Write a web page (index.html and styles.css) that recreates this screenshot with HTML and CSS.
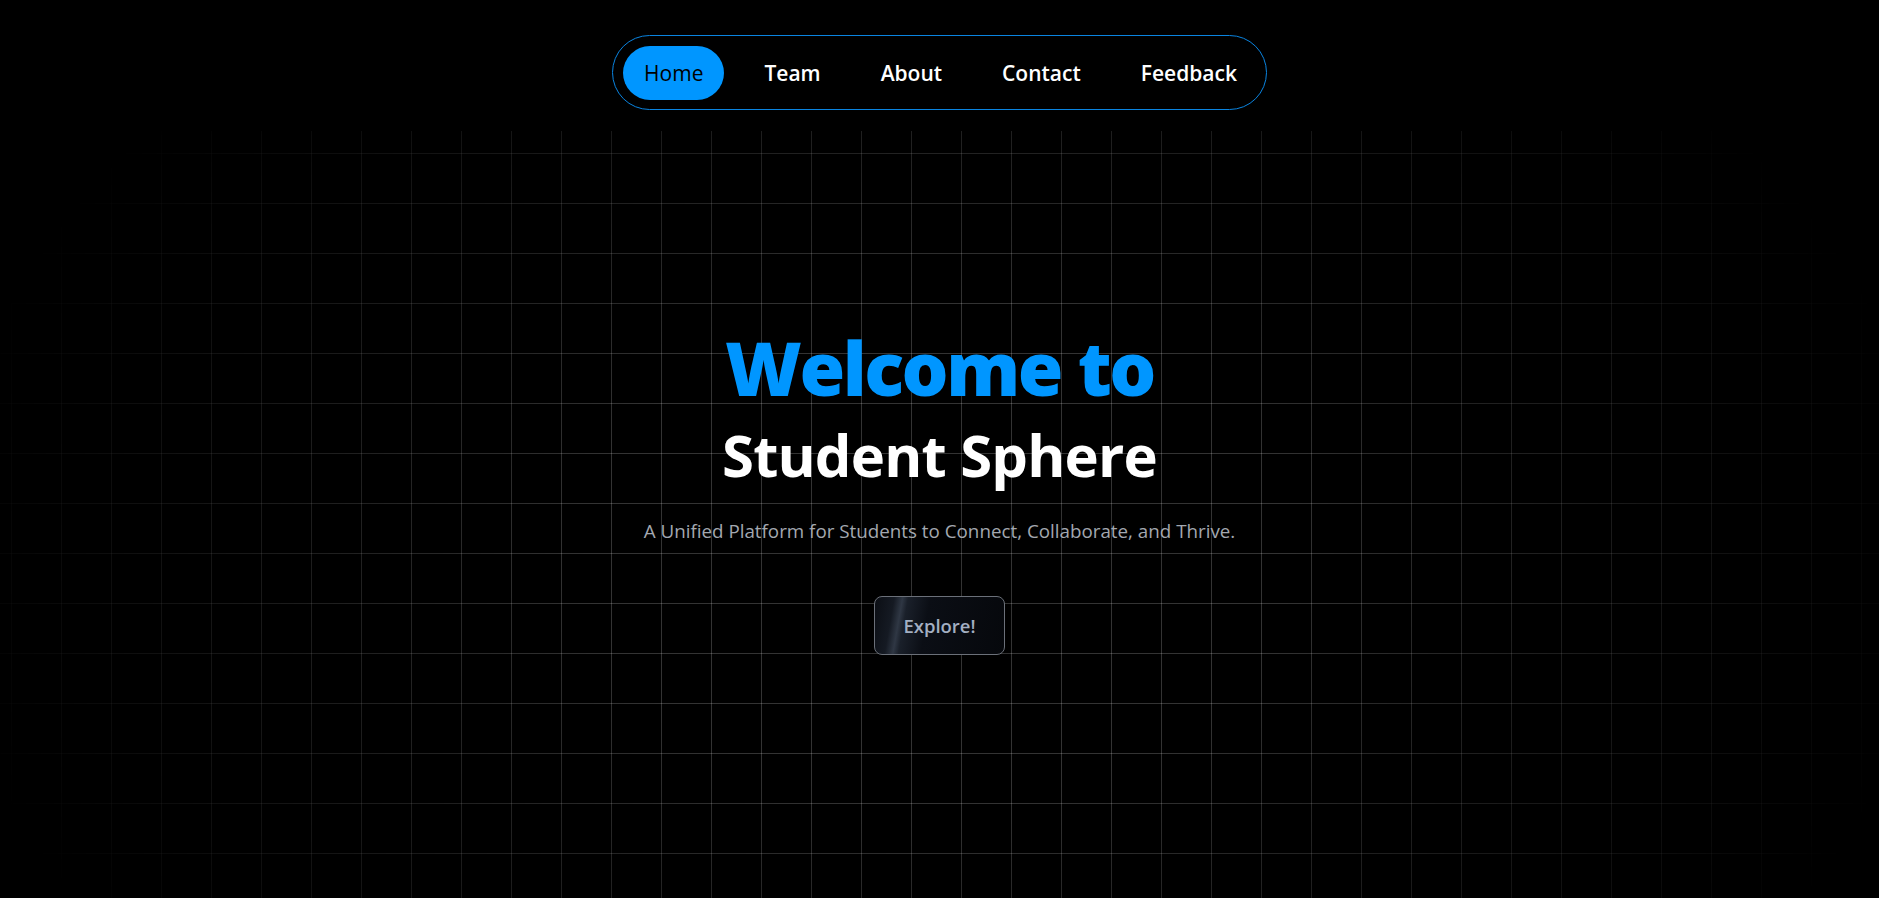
FILE: index.html
```html
<!DOCTYPE html>
<html lang="en">
<head>
<meta charset="utf-8">
<title>Student Sphere</title>
<link rel="stylesheet" href="styles.css">
</head>
<body>
<div class="page">
  <header class="header">
    <nav class="nav">
      <a class="nav-item active" href="#">Home</a>
      <a class="nav-item" href="#">Team</a>
      <a class="nav-item" href="#">About</a>
      <a class="nav-item" href="#">Contact</a>
      <a class="nav-item" href="#">Feedback</a>
    </nav>
  </header>
  <main class="hero">
    <div class="grid-bg"></div>
    <div class="hero-content">
      <h1 class="title-blue">Welcome to</h1>
      <h2 class="title-white">Student Sphere</h2>
      <p class="subtitle">A Unified Platform for Students to Connect, Collaborate, and Thrive.</p>
      <button class="explore">Explore!</button>
    </div>
  </main>
</div>
</body>
</html>
```
FILE: styles.css
```css
* { box-sizing: border-box; }
html, body { margin: 0; padding: 0; background: #000; }
body {
  font-family: "Open Sans", "Noto Sans", sans-serif;
  color: #fff;
  overflow: hidden;
}
.page {
  height: 100vh;
  display: flex;
  flex-direction: column;
}
.header {
  height: 131px;
  padding-top: 35px;
  display: flex;
  justify-content: center;
  align-items: flex-start;
  flex: none;
}
.nav {
  display: flex;
  gap: 20px;
  padding: 9.5px 9px 9.5px 10px;
  border: 1px solid #0a84e0;
  border-radius: 40px;
}
.nav-item {
  display: block;
  padding: 12px 20px;
  line-height: 30px;
  font-size: 21px;
  font-weight: 600;
  color: #fff;
  text-decoration: none;
  border-radius: 28px;
}
.nav-item.active {
  padding: 12px 21px;
  background: #0096ff;
  color: #000;
  font-weight: 500;
}
.hero {
  position: relative;
  flex: 1;
  overflow: hidden;
}
.grid-bg {
  position: absolute;
  inset: 0;
  background-image:
    linear-gradient(to right, rgba(255,255,255,0.2) 1px, transparent 1px),
    linear-gradient(to bottom, rgba(255,255,255,0.2) 1px, transparent 1px);
  background-size: 50px 50px;
  background-position: 11px 22px;
  -webkit-mask-image: radial-gradient(ellipse 1000px 700px at 50% 55%, #000 35%, transparent 100%);
  mask-image: radial-gradient(ellipse 1000px 700px at 50% 55%, #000 35%, transparent 100%);
}
.hero-content {
  position: relative;
  display: flex;
  flex-direction: column;
  align-items: center;
  padding-top: 197px;
  text-align: center;
}
.title-blue {
  margin: 0;
  font-size: 74px;
  line-height: 80px;
  font-weight: 800;
  letter-spacing: -2.5px;
  color: #0096ff;
}
.title-white {
  margin: 17px 0 0;
  font-size: 58px;
  line-height: 60px;
  font-weight: 700;
  letter-spacing: -0.8px;
  color: #fff;
}
.subtitle {
  margin: 32.5px 0 0;
  font-size: 18.8px;
  line-height: 27px;
  color: #a3a8b0;
}
.explore {
  margin-top: 51px;
  padding: 15px 28px;
  line-height: 27px;
  font-family: inherit;
  font-size: 18.5px;
  font-weight: 600;
  color: #a3afc2;
  border: 1px solid #6b7079;
  border-radius: 8px;
  background: linear-gradient(100deg, #0b0e14 0%, #151a23 14%, #2f3744 20%, #1a202a 24%, #0b0e15 40%, #06080c 100%);
  cursor: pointer;
}
```
